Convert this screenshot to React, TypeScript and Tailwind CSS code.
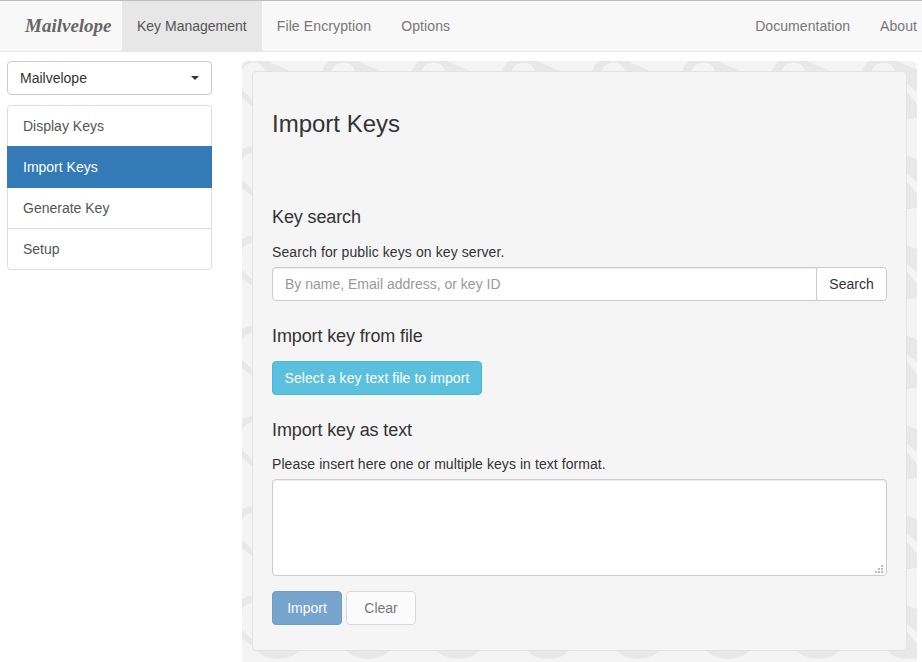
import React from 'react';

const navLeft = ['File Encryption', 'Options'];
const sideItems = ['Display Keys', 'Import Keys', 'Generate Key', 'Setup'];

// background tile of the settings panel, only the edges show around the card
const TileShapes = () => (
  <>
    <path
      fillRule="evenodd"
      d="M-10.4 11A23 23 0 0 1 27 1L51 11ZM-.5 11A12.3 12.3 0 0 1 23.5 11Z"
    />
    <path d="M34 11L47 11L47 46L61.5 46A33 33 0 0 1 10.5 46L34 46Z" />
    <path d="M0 29L10 38L10 45L0 37Z" />
    <path d="M33 21L45 31L45 43L33 28Z" fill="#f4f4f4" />
  </>
);

const PanelPattern = () => (
  <svg className="absolute inset-0 h-full w-full" aria-hidden="true">
    <defs>
      <pattern id="tile" width="90" height="90" patternUnits="userSpaceOnUse">
        <g fill="#e8e8e8">
          <TileShapes />
          <g transform="translate(90 0)">
            <TileShapes />
          </g>
          <g transform="translate(0 90)">
            <TileShapes />
          </g>
          <g transform="translate(90 90)">
            <TileShapes />
          </g>
        </g>
      </pattern>
    </defs>
    <rect width="100%" height="100%" fill="url(#tile)" />
  </svg>
);

const ResizeGrip = () => (
  <svg className="absolute right-[4px] bottom-[3px] h-2 w-2" viewBox="0 0 8 8" fill="#bbb" aria-hidden="true">
    <rect x="6" y="0" width="2" height="2" />
    <rect x="3" y="3" width="2" height="2" />
    <rect x="6" y="3" width="2" height="2" />
    <rect x="0" y="6" width="2" height="2" />
    <rect x="3" y="6" width="2" height="2" />
    <rect x="6" y="6" width="2" height="2" />
  </svg>
);

const Navbar = () => (
  <nav className="flex h-[52px] shrink-0 items-stretch border-t border-b border-t-[#bdbdbd] border-b-[#e7e7e7] bg-[#f8f8f8] text-[#777]">
    <a className="flex w-[122px] items-center pl-[25px] font-['Liberation_Serif',serif] text-[19px] font-bold italic text-[#666]">
      Mailvelope
    </a>
    <a className="flex items-center bg-[#e7e7e7] px-[15px] text-[#555]">Key Management</a>
    {navLeft.map(item => (
      <a key={item} className="flex items-center px-[15px] tracking-[0.12px]">
        {item}
      </a>
    ))}
    <div className="ml-auto flex tracking-[0.06px]">
      <a className="flex items-center px-[15px]">Documentation</a>
      <a className="flex items-center pl-[15px] pr-[5px]">About</a>
    </div>
  </nav>
);

const Sidebar = () => (
  <aside className="w-[205px] shrink-0">
    <button className="flex h-[34px] w-full items-center justify-between rounded border border-[#ccc] bg-white pl-3 pr-3 text-[#333]">
      Mailvelope
      <span className="border-x-4 border-t-4 border-x-transparent border-t-[#333]" />
    </button>
    <ul className="mt-2.5 rounded border border-[#ddd] bg-white text-[#555]">
      {sideItems.map((item, i) => (
        <li
          key={item}
          className={
            item === 'Import Keys'
              ? '-mx-px flex h-[42px] items-center bg-[#337ab7] px-4 text-white'
              : i === 3
                ? 'flex h-[41px] items-center border-t border-[#ddd] px-[15px]'
                : 'flex h-[40px] items-center px-[15px]'
          }
        >
          {item}
        </li>
      ))}
    </ul>
  </aside>
);

const SectionTitle = ({ children, className }: { children: React.ReactNode; className: string }) => (
  <h4 className={`text-[18px] leading-5 font-medium tracking-[-0.12px] text-[#333] ${className}`}>{children}</h4>
);

const App: React.FC = () => {
  return (
    <div className="flex h-[662px] flex-col overflow-hidden bg-white font-['Liberation_Sans',Arial,sans-serif] text-[14px] leading-5 text-[#333]">
      <Navbar />
      <div className="flex min-h-0 flex-1 pt-[9px] pl-[7px] pr-[5px]">
        <Sidebar />
        <main className="relative ml-[30px] flex-1 overflow-hidden rounded-t-md bg-[#f4f4f4] px-2.5 pt-2.5">
          <PanelPattern />
          <section className="relative h-[580px] rounded border border-[#e3e3e3] bg-[#f5f5f5] px-[19px]">
            <h3 className="mt-[39px] text-[24px] leading-[26px] font-medium text-[#333]">Import Keys</h3>
            <SectionTitle className="mt-[70px]">Key search</SectionTitle>
            <p className="mt-[15px] tracking-[0.1px]">Search for public keys on key server.</p>
            <div className="mt-[5px] flex h-[34px]">
              <input
                readOnly
                placeholder="By name, Email address, or key ID"
                className="min-w-0 flex-1 rounded-l border border-[#ccc] bg-white px-3 text-[#555] shadow-[inset_0_1px_1px_rgba(0,0,0,0.075)] placeholder:text-[#999]"
              />
              <button className="-ml-px w-[71px] rounded-r border border-[#ccc] bg-white text-[#333]">Search</button>
            </div>
            <SectionTitle className="mt-[25px]">Import key from file</SectionTitle>
            <button className="mt-[15px] flex h-[34px] w-[210px] items-center justify-center rounded border border-[#46b8da] bg-[#5bc0de] tracking-[0.06px] text-white">
              Select a key text file to import
            </button>
            <SectionTitle className="mt-[25px]">Import key as text</SectionTitle>
            <p className="mt-[14px] tracking-[0.07px]">Please insert here one or multiple keys in text format.</p>
            <div className="relative mt-[5px]">
              <textarea
                readOnly
                className="block h-[97px] w-full resize-none rounded border border-[#ccc] bg-white shadow-[inset_0_1px_1px_rgba(0,0,0,0.075)]"
              />
              <ResizeGrip />
            </div>
            <div className="mt-[15px] flex gap-1">
              <button className="h-[34px] w-[70px] rounded border border-[#2e6da4] bg-[#337ab7] text-white opacity-65">
                Import
              </button>
              <button className="h-[34px] w-[70px] rounded border border-[#ccc] bg-white text-[#333] opacity-65">
                Clear
              </button>
            </div>
          </section>
        </main>
      </div>
    </div>
  );
};

export default App;
